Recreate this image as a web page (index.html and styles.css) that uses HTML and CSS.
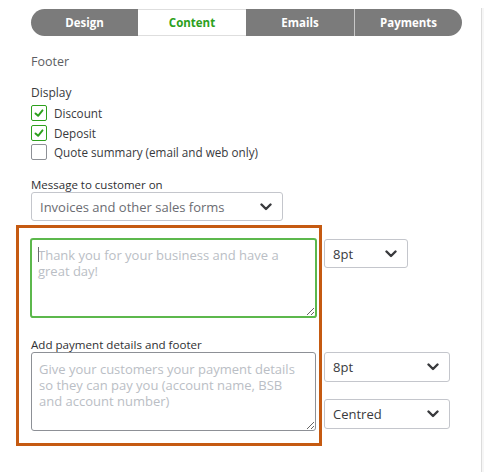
FILE: index.html
```html
<!DOCTYPE html>
<html lang="en">
<head>
<meta charset="utf-8">
<title>Footer settings</title>
<link rel="stylesheet" href="styles.css">
</head>
<body>
<div class="page">
  <main class="main">
    <nav class="tabs">
      <div class="tab">Design</div>
      <div class="tab tab-active">Content</div>
      <div class="tab">Emails</div>
      <div class="tab tab-last">Payments</div>
    </nav>

    <div class="section-title">Footer</div>

    <div class="label">Display</div>
    <div class="checks">
      <label class="check"><span class="box box-on"><svg viewBox="0 0 16 16" width="16" height="16"><polyline points="4,8.5 7,11.2 12,5" fill="none" stroke="#2ca01c" stroke-width="2.2" stroke-linecap="round" stroke-linejoin="round"/></svg></span>Discount</label>
      <label class="check"><span class="box box-on"><svg viewBox="0 0 16 16" width="16" height="16"><polyline points="4,8.5 7,11.2 12,5" fill="none" stroke="#2ca01c" stroke-width="2.2" stroke-linecap="round" stroke-linejoin="round"/></svg></span>Deposit</label>
      <label class="check"><span class="box"></span>Quote summary (email and web only)</label>
    </div>

    <div class="label label-msg">Message to customer on</div>
    <div class="select select-wide">
      <span class="select-text">Invoices and other sales forms</span>
      <svg class="chev" viewBox="0 0 12 8" width="12" height="8"><polyline points="1.5,1.5 6,6 10.5,1.5" fill="none" stroke="#393a3d" stroke-width="2.4" stroke-linecap="round" stroke-linejoin="round"/></svg>
    </div>

    <div class="highlight-area">
      <div class="highlight"></div>
      <div class="row row-1">
        <div class="ta-wrap">
          <textarea class="ta ta-focus" placeholder="Thank you for your business and have a great day!"></textarea>
          <span class="caret"></span>
        </div>
        <div class="select select-sm">
          <span class="select-text dark">8pt</span>
          <svg class="chev" viewBox="0 0 12 8" width="12" height="8"><polyline points="1.5,1.5 6,6 10.5,1.5" fill="none" stroke="#393a3d" stroke-width="2.4" stroke-linecap="round" stroke-linejoin="round"/></svg>
        </div>
      </div>

      <div class="label label-pay">Add payment details and footer</div>
      <div class="row row-2">
        <textarea class="ta" placeholder="Give your customers your payment details so they can pay you (account name, BSB and account number)"></textarea>
        <div class="select-col">
          <div class="select select-md">
            <span class="select-text dark">8pt</span>
            <svg class="chev" viewBox="0 0 12 8" width="12" height="8"><polyline points="1.5,1.5 6,6 10.5,1.5" fill="none" stroke="#393a3d" stroke-width="2.4" stroke-linecap="round" stroke-linejoin="round"/></svg>
          </div>
          <div class="select select-md">
            <span class="select-text dark">Centred</span>
            <svg class="chev" viewBox="0 0 12 8" width="12" height="8"><polyline points="1.5,1.5 6,6 10.5,1.5" fill="none" stroke="#393a3d" stroke-width="2.4" stroke-linecap="round" stroke-linejoin="round"/></svg>
          </div>
        </div>
      </div>
    </div>
  </main>
  <div class="side"></div>
</div>
</body>
</html>
```
FILE: styles.css
```css
* { box-sizing: border-box; }
html, body { margin: 0; padding: 0; background: #fff; }
body {
  font-family: "Open Sans", Lato, Arial, sans-serif;
  color: #393a3d;
  width: 484px;
  height: 472px;
  overflow: hidden;
}
.page { display: flex; height: 472px; }
.main { width: 481px; padding: 9px 0 0 31px; }
.side {
  flex: 1;
  margin-top: 8px;
  border-left: 1px solid #dcdcdc;
  background: #f6f6f6;
}

.tabs {
  display: flex;
  width: 431px;
  height: 27px;
  border-radius: 14px;
  overflow: hidden;
  background: #7b7b7b;
}
.tab {
  width: 108px;
  display: flex;
  align-items: center;
  justify-content: center;
  color: #fff;
  font-weight: 700;
  font-size: 11.5px;
}
.tab:first-child { width: 107px; }
.tab-active {
  background: #fff;
  color: #2ca01c;
  border-top: 1px solid #dedede;
  border-bottom: 1px solid #dedede;
}
.tab-last { border-left: 1px solid #c8c8c8; }

.section-title {
  margin-top: 18px;
  font-size: 12.5px;
  line-height: 16px;
  color: #5d5e63;
}
.label {
  font-size: 12px;
  line-height: 16px;
  color: #393a3d;
}
.section-title + .label { margin-top: 15px; }

.checks {
  display: flex;
  flex-direction: column;
  gap: 3.5px;
  margin-top: 4px;
}
.check {
  display: flex;
  align-items: center;
  gap: 7px;
  font-size: 11.7px;
  line-height: 16px;
  color: #393a3d;
}
.box {
  width: 16px;
  height: 16px;
  border: 1px solid #8d9096;
  border-radius: 2px;
  display: flex;
  align-items: center;
  justify-content: center;
  background: #fff;
  flex: none;
}
.box svg { display: block; }
.box-on { border-color: #2ca01c; }

.label-msg { margin-top: 17px; line-height: 15px; font-size: 11.5px; color: #2f3033; }

.select {
  display: flex;
  align-items: center;
  justify-content: space-between;
  border: 1px solid #c4c6cc;
  border-radius: 3px;
  background: #fff;
  padding: 0 10px 0 8px;
}
.select-text { font-size: 13px; color: #6b6c72; }
.select-text.dark { color: #393a3d; }
.chev { display: block; }
.select-wide { width: 252px; height: 29px; }
.select-sm { width: 84px; height: 29px; }
.select-md { width: 126px; height: 30px; }

.highlight-area {
  position: relative;
  margin-top: 4px;
  padding-top: 13px;
}
.highlight {
  position: absolute;
  left: -15px;
  top: 0;
  width: 306px;
  height: 221px;
  border: 3px solid #c55a11;
  pointer-events: none;
}
.row { display: flex; align-items: flex-start; }
.row-1 { margin-left: -1px; gap: 7px; }
.row-1 .select { margin-top: 1px; }
.row-2 { gap: 8px; }

.ta-wrap { position: relative; }
.caret {
  position: absolute;
  left: 8px;
  top: 9px;
  width: 1px;
  height: 15px;
  background: #6b6c72;
}

.ta {
  display: block;
  resize: vertical;
  font-family: inherit;
  font-size: 13px;
  line-height: 16px;
  color: #393a3d;
  border-radius: 3px;
  background: #fff;
  padding: 8px 7px;
  margin: 0;
}
.ta::placeholder { color: #babec5; }
.ta-focus {
  width: 287px;
  height: 80px;
  border: 2px solid #5cb84c;
  outline: none;
  padding: 7px 6px;
}
.ta:not(.ta-focus) {
  width: 285px;
  height: 79px;
  border: 1px solid #8d9096;
}

.label-pay {
  margin-top: 19px;
  line-height: 15px;
  font-size: 11.6px;
  color: #2f3033;
}
.select-col { display: flex; flex-direction: column; gap: 17px; }
```
